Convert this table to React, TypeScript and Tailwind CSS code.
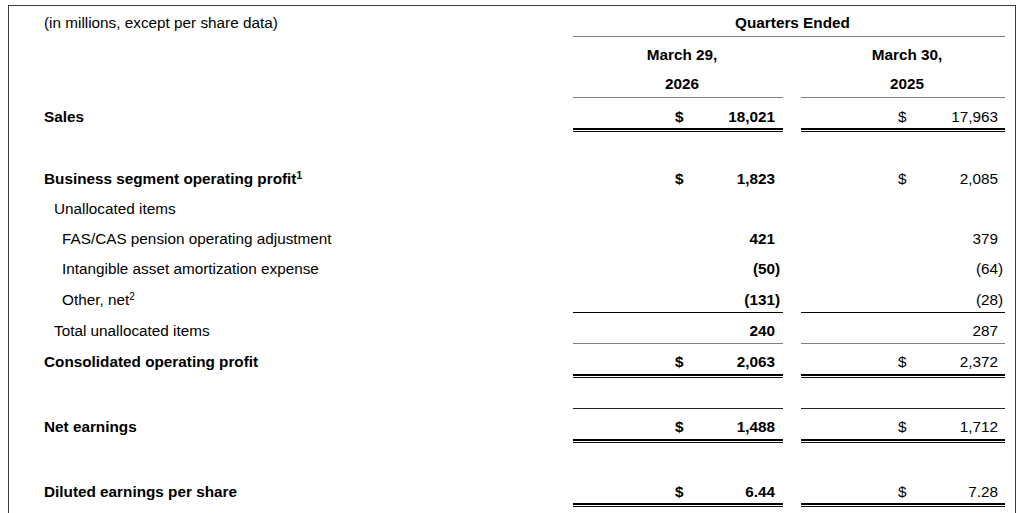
import React from "react";

type Val = { v: string; neg?: boolean; dollar?: boolean };

function Num({ v, neg }: { v: string; neg?: boolean }) {
  if (neg) {
    return (
      <>
        ({v}
        <span className="inline-block w-0">)</span>
      </>
    );
  }
  return <>{v}</>;
}

function Cols({ a, b, pt }: { a?: Val; b?: Val; pt: string }) {
  return (
    <div className="flex w-[432px] gap-[18px]">
      <div className={`flex w-[210px] pl-[102px] pr-[8px] font-bold ${pt}`}>
        <span className="w-[8px]">{a?.dollar ? "$" : ""}</span>
        <span className="flex-1 text-right">{a ? <Num v={a.v} neg={a.neg} /> : null}</span>
      </div>
      <div className={`flex w-[204px] pl-[97px] pr-[7px] ${pt}`}>
        <span className="w-[8px]">{b?.dollar ? "$" : ""}</span>
        <span className="flex-1 text-right">{b ? <Num v={b.v} neg={b.neg} /> : null}</span>
      </div>
    </div>
  );
}

function Row({
  label,
  indent = 0,
  bold,
  a,
  b,
  h = "h-[30px]",
  pt = "pt-[6px]",
}: {
  label: React.ReactNode;
  indent?: 0 | 1 | 2;
  bold?: boolean;
  a?: Val;
  b?: Val;
  h?: string;
  pt?: string;
}) {
  const pl = indent === 0 ? "pl-[35px]" : indent === 1 ? "pl-[45px]" : "pl-[53px]";
  return (
    <div className={`flex ${h}`}>
      <div className={`flex-1 ${pl} ${pt} ${bold ? "font-bold" : ""}`}>{label}</div>
      <Cols a={a} b={b} pt={pt} />
    </div>
  );
}

function Line({ color = "bg-[#808080]" }: { color?: string }) {
  return (
    <div className="flex">
      <div className="flex-1" />
      <div className="flex w-[432px] gap-[18px]">
        <div className={`w-[210px] h-px ${color}`} />
        <div className={`w-[204px] h-px ${color}`} />
      </div>
    </div>
  );
}

function DoubleSeg({ w }: { w: string }) {
  return (
    <div className={`${w} flex flex-col`}>
      <div className="h-[2px] bg-black" />
      <div className="h-px" />
      <div className="h-px bg-[#111]" />
    </div>
  );
}

function Double() {
  return (
    <div className="flex">
      <div className="flex-1" />
      <div className="flex w-[432px] gap-[18px]">
        <DoubleSeg w="w-[210px]" />
        <DoubleSeg w="w-[204px]" />
      </div>
    </div>
  );
}

function Blank({ h }: { h: string }) {
  return <div className={h} />;
}

export default function App() {
  return (
    <div className="min-h-screen bg-white font-['Liberation_Sans',Arial,sans-serif] text-[15.3px] leading-[17px] text-black">
      <div className="mx-2 mt-[5px] h-[600px] border border-[#3a3a3a] pr-[10px]">
        {/* header */}
        <div className="flex h-[30px]">
          <div className="flex-1 pl-[35px] pt-[8px]">(in millions, except per share data)</div>
          <div className="w-[432px] pl-[7px] pt-[8px] text-center font-bold">Quarters Ended</div>
        </div>
        <div className="flex">
          <div className="flex-1" />
          <div className="h-px w-[432px] bg-[#808080]" />
        </div>
        <div className="flex h-[30px]">
          <div className="flex-1" />
          <div className="flex w-[432px] gap-[18px] font-bold">
            <div className="w-[210px] pl-[8px] pt-[9px] text-center">March 29,</div>
            <div className="w-[204px] pl-[8px] pt-[9px] text-center">March 30,</div>
          </div>
        </div>
        <div className="flex h-[30px]">
          <div className="flex-1" />
          <div className="flex w-[432px] gap-[18px] font-bold">
            <div className="w-[210px] pl-[8px] pt-[8px] text-center">2026</div>
            <div className="w-[204px] pl-[8px] pt-[8px] text-center">2025</div>
          </div>
        </div>
        <Line />
        <Row
          label="Sales"
          bold
          pt="pt-[10px]"
          a={{ v: "18,021", dollar: true }}
          b={{ v: "17,963", dollar: true }}
        />
        <Double />
        <Blank h="h-[32px]" />
        <Row
          label={
            <>
              Business segment operating profit
              <sup className="text-[10px]">1</sup>
            </>
          }
          bold
          a={{ v: "1,823", dollar: true }}
          b={{ v: "2,085", dollar: true }}
        />
        <Row label="Unallocated items" indent={1} />
        <Row label="FAS/CAS pension operating adjustment" indent={2} a={{ v: "421" }} b={{ v: "379" }} />
        <Row
          label="Intangible asset amortization expense"
          indent={2}
          a={{ v: "50", neg: true }}
          b={{ v: "64", neg: true }}
        />
        <Row
          label={
            <>
              Other, net<sup className="text-[10px]">2</sup>
            </>
          }
          indent={2}
          h="h-[28px]"
          pt="pt-[7px]"
          a={{ v: "131", neg: true }}
          b={{ v: "28", neg: true }}
        />
        <Line color="bg-black" />
        <Row label="Total unallocated items" indent={1} pt="pt-[9px]" a={{ v: "240" }} b={{ v: "287" }} />
        <Line />
        <Row
          label="Consolidated operating profit"
          bold
          pt="pt-[9px]"
          a={{ v: "2,063", dollar: true }}
          b={{ v: "2,372", dollar: true }}
        />
        <Double />
        <Blank h="h-[30px]" />
        <Line color="bg-[#222]" />
        <Row
          label="Net earnings"
          bold
          pt="pt-[9px]"
          a={{ v: "1,488", dollar: true }}
          b={{ v: "1,712", dollar: true }}
        />
        <Double />
        <Blank h="h-[30px]" />
        <Row
          label="Diluted earnings per share"
          bold
          pt="pt-[10px]"
          a={{ v: "6.44", dollar: true }}
          b={{ v: "7.28", dollar: true }}
        />
        <Double />
      </div>
    </div>
  );
}
